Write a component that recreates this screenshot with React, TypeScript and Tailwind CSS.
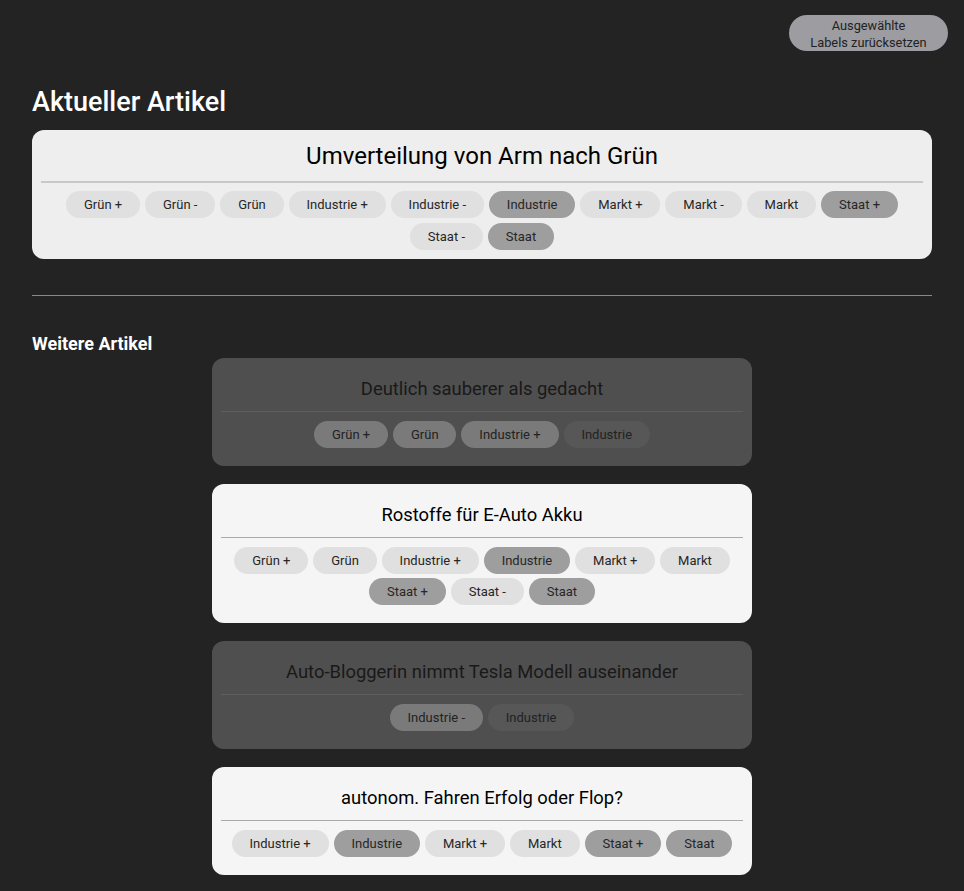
import React from "react";

interface Label {
  name: string;
  active?: boolean;
}

interface Article {
  title: string;
  dim?: boolean;
  labels: Label[];
}

const current: Article = {
  title: "Umverteilung von Arm nach Grün",
  labels: [
    { name: "Grün +" },
    { name: "Grün -" },
    { name: "Grün" },
    { name: "Industrie +" },
    { name: "Industrie -" },
    { name: "Industrie", active: true },
    { name: "Markt +" },
    { name: "Markt -" },
    { name: "Markt" },
    { name: "Staat +", active: true },
    { name: "Staat -" },
    { name: "Staat", active: true },
  ],
};

const others: Article[] = [
  {
    title: "Deutlich sauberer als gedacht",
    dim: true,
    labels: [
      { name: "Grün +" },
      { name: "Grün" },
      { name: "Industrie +" },
      { name: "Industrie", active: true },
    ],
  },
  {
    title: "Rostoffe für E-Auto Akku",
    labels: [
      { name: "Grün +" },
      { name: "Grün" },
      { name: "Industrie +" },
      { name: "Industrie", active: true },
      { name: "Markt +" },
      { name: "Markt" },
      { name: "Staat +", active: true },
      { name: "Staat -" },
      { name: "Staat", active: true },
    ],
  },
  {
    title: "Auto-Bloggerin nimmt Tesla Modell auseinander",
    dim: true,
    labels: [{ name: "Industrie -" }, { name: "Industrie", active: true }],
  },
  {
    title: "autonom. Fahren Erfolg oder Flop?",
    labels: [
      { name: "Industrie +" },
      { name: "Industrie", active: true },
      { name: "Markt +" },
      { name: "Markt" },
      { name: "Staat +", active: true },
      { name: "Staat", active: true },
    ],
  },
];

function Chip({ label, dim }: { label: Label; dim?: boolean }) {
  let color = label.active ? "bg-[#9e9e9e]" : "bg-[#e0e0e0]";
  if (dim) color = label.active ? "bg-[#575757]" : "bg-[#7a7a7a]";
  return (
    <span
      className={`flex h-[27px] items-center rounded-full px-[17.9px] text-[13px] ${
        dim ? "text-[#222]" : "text-[#262626]"
      } ${color}`}
    >
      {label.name}
    </span>
  );
}

function ArticleCard({ article }: { article: Article }) {
  const dim = article.dim;
  return (
    <div
      className={`w-[540px] rounded-xl px-[9px] pt-[17px] pb-[18px] ${
        dim ? "bg-[#4f4f4f]" : "bg-[#f5f5f5]"
      }`}
    >
      <h3
        className={`text-center text-[18.4px] leading-[28px] ${
          dim ? "text-[#191919]" : "text-black"
        }`}
      >
        {article.title}
      </h3>
      <div
        className={`mt-[8px] h-px ${dim ? "bg-[#5e5e5e]" : "bg-[#aaaaaa]"}`}
      />
      <div className="mt-[9px] flex flex-wrap justify-center gap-x-[5px] gap-y-[4px]">
        {article.labels.map((l) => (
          <Chip key={l.name} label={l} dim={dim} />
        ))}
      </div>
    </div>
  );
}

export default function App() {
  return (
    <div className="min-h-[891px] bg-[#232323] px-[32px] pb-[16px] font-['Roboto',sans-serif]">
      <div className="flex justify-end pt-[15px] -mr-[16px]">
        <button
          type="button"
          className="w-[159px] rounded-full bg-[#9d9ca1] py-[1px] text-center text-[12.8px] leading-[17px] text-[#222]"
        >
          <span className="block translate-y-[1px]">
            Ausgewählte
            <br />
            Labels zurücksetzen
          </span>
        </button>
      </div>

      <h1 className="mt-[33px] text-[27px] font-medium leading-[36px] text-white">
        Aktueller Artikel
      </h1>

      <div className="mt-[10px] rounded-xl bg-[#eeeeee] px-[9px] pt-[10px] pb-[9px]">
        <h2 className="text-center text-[24px] leading-[32px] text-black">
          {current.title}
        </h2>
        <div className="mt-[9px] h-[2px] bg-[#c8c8c8]" />
        <div className="mt-[8px] flex flex-wrap justify-center gap-[5px]">
          {current.labels.map((l) => (
            <Chip key={l.name} label={l} />
          ))}
        </div>
      </div>

      <div className="mt-[36px] h-px bg-[#888888]" />

      <h2 className="mt-[36px] text-[18px] font-bold leading-[24px] text-white">
        Weitere Artikel
      </h2>

      <div className="mt-[2px] flex flex-col items-center gap-[18px]">
        {others.map((a) => (
          <ArticleCard key={a.title} article={a} />
        ))}
      </div>
    </div>
  );
}
